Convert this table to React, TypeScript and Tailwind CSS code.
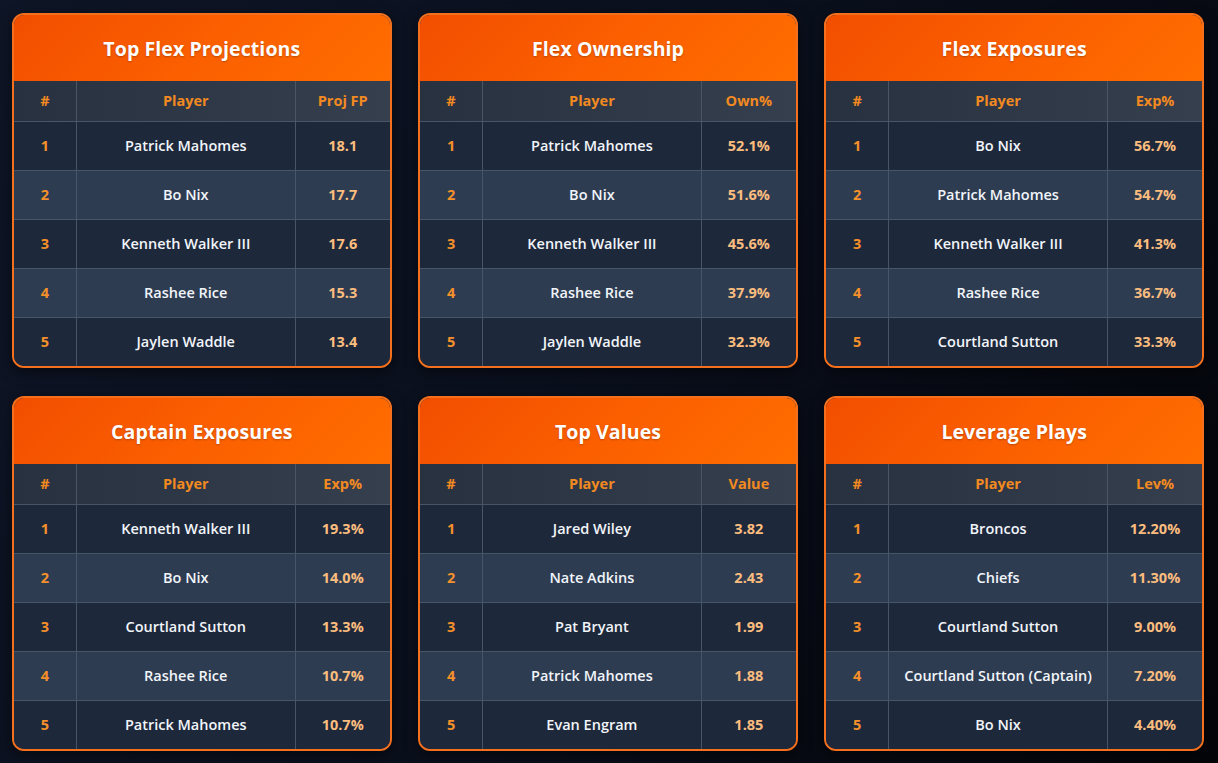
import React from "react";

type Card = { title: string; col: string; rows: [string, string][] };

const cards: Card[] = [
  {
    title: "Top Flex Projections",
    col: "Proj FP",
    rows: [
      ["Patrick Mahomes", "18.1"],
      ["Bo Nix", "17.7"],
      ["Kenneth Walker III", "17.6"],
      ["Rashee Rice", "15.3"],
      ["Jaylen Waddle", "13.4"],
    ],
  },
  {
    title: "Flex Ownership",
    col: "Own%",
    rows: [
      ["Patrick Mahomes", "52.1%"],
      ["Bo Nix", "51.6%"],
      ["Kenneth Walker III", "45.6%"],
      ["Rashee Rice", "37.9%"],
      ["Jaylen Waddle", "32.3%"],
    ],
  },
  {
    title: "Flex Exposures",
    col: "Exp%",
    rows: [
      ["Bo Nix", "56.7%"],
      ["Patrick Mahomes", "54.7%"],
      ["Kenneth Walker III", "41.3%"],
      ["Rashee Rice", "36.7%"],
      ["Courtland Sutton", "33.3%"],
    ],
  },
  {
    title: "Captain Exposures",
    col: "Exp%",
    rows: [
      ["Kenneth Walker III", "19.3%"],
      ["Bo Nix", "14.0%"],
      ["Courtland Sutton", "13.3%"],
      ["Rashee Rice", "10.7%"],
      ["Patrick Mahomes", "10.7%"],
    ],
  },
  {
    title: "Top Values",
    col: "Value",
    rows: [
      ["Jared Wiley", "3.82"],
      ["Nate Adkins", "2.43"],
      ["Pat Bryant", "1.99"],
      ["Patrick Mahomes", "1.88"],
      ["Evan Engram", "1.85"],
    ],
  },
  {
    title: "Leverage Plays",
    col: "Lev%",
    rows: [
      ["Broncos", "12.20%"],
      ["Chiefs", "11.30%"],
      ["Courtland Sutton", "9.00%"],
      ["Courtland Sutton (Captain)", "7.20%"],
      ["Bo Nix", "4.40%"],
    ],
  },
];

function StatCard({ card }: { card: Card }) {
  return (
    <div className="rounded-xl border-2 border-[#f4701c] overflow-hidden bg-[#1e293b] shadow-[0_4px_14px_rgba(0,0,0,0.5)]">
      <div className="h-[66px] pt-[2px] flex items-center justify-center bg-[linear-gradient(135deg,#f24e00_0%,#fb5f00_50%,#ff6d00_100%)]">
        <h2 className="text-white font-bold text-[19.5px] tracking-[0.1px] [text-shadow:0_1px_2px_rgba(0,0,0,0.25)]">
          {card.title}
        </h2>
      </div>
      <div className="flex h-[40px] bg-[linear-gradient(90deg,#283140,#363f4e)] text-[#f28a21] font-bold text-[14.5px]">
        <div className="w-[16.7%] flex items-center justify-center border-r border-[#4b5563]">#</div>
        <div className="w-[58.3%] flex items-center justify-center border-r border-[#4b5563]">Player</div>
        <div className="flex-1 flex items-center justify-center">{card.col}</div>
      </div>
      {card.rows.map(([name, val], i) => (
        <div
          key={i}
          className={
            "flex h-[49px] border-t border-[#475569] text-[14.5px] font-semibold " +
            (i % 2 === 1 ? "bg-[#2e3c52]" : "bg-[#1e283b]")
          }
        >
          <div className="w-[16.7%] flex items-center justify-center border-r border-[#475569] text-[#f5902a] font-bold">
            {i + 1}
          </div>
          <div className="w-[58.3%] flex items-center justify-center border-r border-[#475569] text-[#f1f5f9]">
            {name}
          </div>
          <div className="flex-1 flex items-center justify-center text-[#fbbd7e] font-bold">{val}</div>
        </div>
      ))}
    </div>
  );
}

export default function App() {
  return (
    <div
      className="w-[1218px] h-[763px] overflow-hidden bg-[linear-gradient(120deg,#0e1526_0%,#0a0f1c_50%,#040509_100%)] pt-[13px] pl-[12px] pr-[14px]"
      style={{ fontFamily: '"Open Sans", "Noto Sans", sans-serif' }}
    >
      <div className="grid grid-cols-3 gap-x-[26.5px] gap-y-[28px]">
        {cards.map((c) => (
          <StatCard key={c.title} card={c} />
        ))}
      </div>
    </div>
  );
}
